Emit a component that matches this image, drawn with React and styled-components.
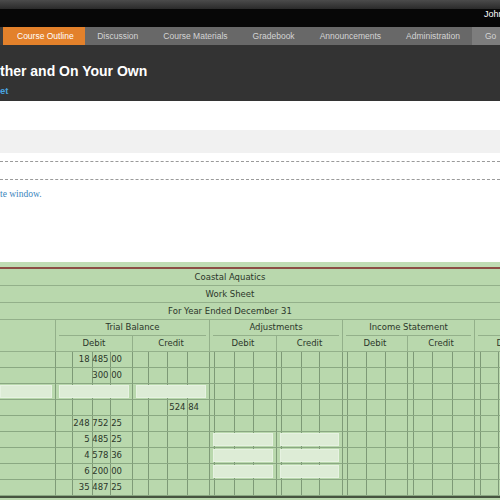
import React from 'react';
import styled, { createGlobalStyle } from 'styled-components';

const Global = createGlobalStyle`
  html, body { margin: 0; padding: 0; background: #fff; }
  body { width: 500px; height: 500px; overflow: hidden; font-family: "Liberation Sans", Arial, sans-serif; }
`;

const Page = styled.div`
  width: 500px;
  height: 500px;
  overflow: hidden;
  display: flex;
  flex-direction: column;
  background: #fff;
`;

const WindowTop = styled.div`
  flex: 0 0 9px;
  background: linear-gradient(#4b4b4b, #2a2a2a);
`;

const UserBar = styled.div`
  flex: 0 0 18px;
  background: #070707;
  display: flex;
  justify-content: flex-end;
`;

const UserName = styled.span`
  width: 16px;
  white-space: nowrap;
  color: #fff;
  font-size: 9px;
  line-height: 9px;
  padding-top: 1px;
`;

const Nav = styled.nav`
  flex: 0 0 18px;
  display: flex;
  background: #686868;
  border-left: 3px solid #3d3d3d;
`;

const Tab = styled.a`
  display: flex;
  align-items: center;
  padding: ${p => (p.$active ? '0 11px 0 14px' : '0 12.5px')};
  font-size: 8.5px;
  white-space: nowrap;
  color: ${p => (p.$active ? '#fff' : '#d4d4d4')};
  background: ${p => (p.$active ? '#e3812b' : p.$go ? '#7d7d7d' : 'transparent')};
  ${p => p.$go && 'flex: 1;'}
`;

const CourseHeader = styled.header`
  flex: 0 0 56px;
  background: #333;
  display: flex;
  flex-direction: column;
  padding-top: 18px;
  box-sizing: border-box;
`;

const Title = styled.h1`
  margin: 0;
  font-size: 14px;
  line-height: 17px;
  font-weight: bold;
  color: #fff;
  white-space: nowrap;
`;

const SubLink = styled.a`
  margin-top: 5px;
  font-size: 9.5px;
  line-height: 11px;
  font-weight: bold;
  color: #4aa3df;
`;

const Body = styled.main`
  display: flex;
  flex-direction: column;
  padding-top: 29px;
`;

const Toolbar = styled.div`
  height: 23px;
  background: #f1f1f1;
`;

const Divider = styled.hr`
  margin: 0;
  border: 0;
  border-top: 1px dashed #9a9a9a;
  margin-top: ${p => p.$gap}px;
`;

const Notice = styled.p`
  margin: 8px 0 0;
  font-family: "Liberation Serif", "Times New Roman", serif;
  font-size: 9.5px;
  line-height: 12px;
  color: #3b86bd;
`;

const SheetArea = styled.section`
  margin-top: 62px;
  background: #c0ddb4;
  padding-top: 5px;
  overflow: hidden;
  flex: 1;
`;

const Sheet = styled.div`
  width: 608px;
  display: grid;
  grid-template-columns: 55px 77px 77px 67px 66px 65px 67px 67px 67px;
  grid-template-rows: 17px 17px 17px 16px 16px repeat(9, 16px) 8px;
  background: #b9d8ad;
  border-top: 2px solid #8c4f45;
  font-family: "DejaVu Sans", Verdana, sans-serif;
  font-size: 8.5px;
  color: #2b362a;
`;

const TitleCell = styled.div`
  grid-column: 1 / -1;
  display: flex;
  align-items: center;
  justify-content: center;
  padding-right: 148px;
  border-bottom: 1px solid #93b08a;
`;

const SideCell = styled.div`
  grid-column: 1;
  grid-row: 4 / span 2;
  border-bottom: 1px solid #93b08a;
`;

const SectionCell = styled.div`
  grid-column: span 2;
  padding: 0 3px;
  border-left: 1px solid #93b08a;
  display: flex;
`;

const SectionLabel = styled.div`
  flex: 1;
  text-align: center;
  line-height: 15px;
  border-bottom: 1px solid #93b08a;
  white-space: nowrap;
`;

const GroupHead = styled.div`
  border-left: 1px solid #93b08a;
  border-bottom: 1px solid #93b08a;
  text-align: center;
  line-height: 15px;
`;

const subLines = (xs, color) =>
  xs.map(x => `linear-gradient(${color}, ${color}) ${x}px 0 / 1px 100% no-repeat`).join(', ');

const AccountCell = styled.div`
  grid-column: 1;
  border-bottom: 1px solid #8aa882;
  display: flex;
`;

const AmountCell = styled.div`
  border-left: 1px solid #7f9b78;
  border-bottom: 1px solid #8aa882;
  background: ${p => subLines(p.$lines, '#7d9976')};
  background-origin: border-box;
  background-clip: border-box;
  text-align: right;
  padding-right: ${p => (p.$field ? 0 : 10)}px;
  line-height: 15px;
  white-space: nowrap;
  display: flex;
  justify-content: flex-end;
`;

const Field = styled.div`
  flex: 1;
  margin: 1px ${p => p.$r}px 1px ${p => p.$l}px;
  background: #ddecd6;
  border: 1px solid #e6f2e1;
  box-sizing: border-box;
`;

const TotalsRow = styled.div`
  grid-column: 1 / -1;
  border-top: 2px solid #46543f;
`;

const GROUPS = [
  [17, 37, 55],
  [16, 35, 55],
  [5, 25, 44],
  [5, 25, 43],
  [5, 24, 43],
  [6, 25, 45],
  [6, 24, 43],
  [6, 25, 45],
];

const ROWS = [
  { amounts: { 0: '18 485 00' } },
  { amounts: { 0: '300 00' } },
  { account: true, fields: [0, 1] },
  { amounts: { 1: '524 84' } },
  { amounts: { 0: '248 752 25' } },
  { amounts: { 0: '5 485 25' }, fields: [2, 3] },
  { amounts: { 0: '4 578 36' }, fields: [2, 3] },
  { amounts: { 0: '6 200 00' }, fields: [2, 3] },
  { amounts: { 0: '35 487 25' } },
];

const TABS = ['Course Outline', 'Discussion', 'Course Materials', 'Gradebook', 'Announcements', 'Administration'];

export default function App() {
  return (
    <Page>
      <Global />
      <WindowTop />
      <UserBar>
        <UserName>John</UserName>
      </UserBar>
      <Nav>
        {TABS.map((t, i) => (
          <Tab key={t} $active={i === 0}>{t}</Tab>
        ))}
        <Tab $go>Go</Tab>
      </Nav>
      <CourseHeader>
        <Title>ther and On Your Own</Title>
        <SubLink>et</SubLink>
      </CourseHeader>
      <Body>
        <Toolbar />
        <Divider $gap={8} />
        <Divider $gap={17} />
        <Notice>te window.</Notice>
      </Body>
      <SheetArea>
        <Sheet>
          <TitleCell>Coastal Aquatics</TitleCell>
          <TitleCell>Work Sheet</TitleCell>
          <TitleCell>For Year Ended December 31</TitleCell>
          <SideCell />
          <SectionCell><SectionLabel>Trial Balance</SectionLabel></SectionCell>
          <SectionCell><SectionLabel>Adjustments</SectionLabel></SectionCell>
          <SectionCell><SectionLabel>Income Statement</SectionLabel></SectionCell>
          <SectionCell><SectionLabel>Balance Sheet</SectionLabel></SectionCell>
          {GROUPS.map((_, i) => (
            <GroupHead key={i}>{i % 2 === 0 ? 'Debit' : 'Credit'}</GroupHead>
          ))}
          {ROWS.map((row, r) => (
            <React.Fragment key={r}>
              <AccountCell>{row.account && <Field $l={0} $r={3} />}</AccountCell>
              {GROUPS.map((lines, g) => {
                const hasField = Boolean(row.fields && row.fields.includes(g));
                return (
                  <AmountCell key={g} $lines={lines} $field={hasField}>
                    {hasField ? <Field $l={3} $r={3} /> : row.amounts && row.amounts[g]}
                  </AmountCell>
                );
              })}
            </React.Fragment>
          ))}
          <TotalsRow />
        </Sheet>
      </SheetArea>
    </Page>
  );
}
